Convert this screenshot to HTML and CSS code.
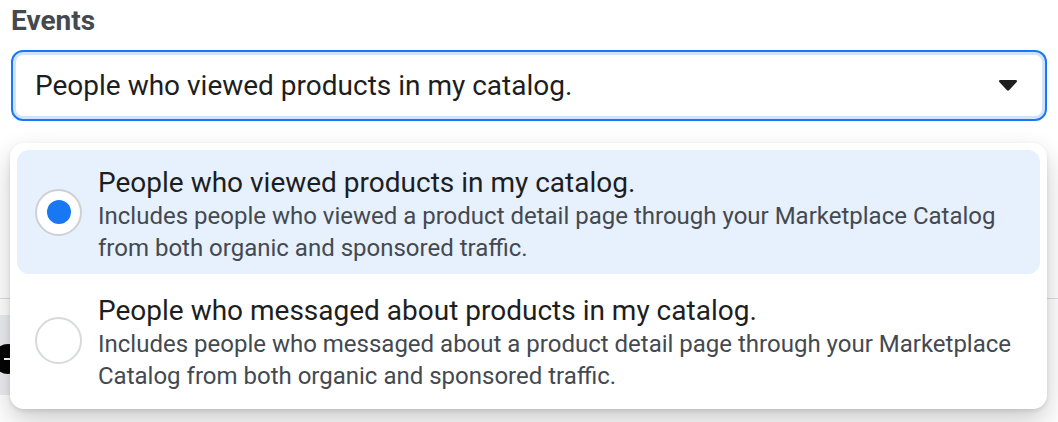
FILE: index.html
```html
<!DOCTYPE html>
<html lang="en">
<head>
<meta charset="utf-8">
<title>Events</title>
<link rel="stylesheet" href="styles.css">
</head>
<body>
<div class="page">
  <div class="field">
    <div class="label">Events</div>
    <div class="select">
      <span class="select-text">People who viewed products in my catalog.</span>
      <svg class="caret" width="18" height="11" viewBox="0 0 18 11"><path d="M1.2 0h15.6c1 0 1.5 1.1.9 1.9L10 10.2c-.5.6-1.5.6-2 0L.3 1.9C-.3 1.1.2 0 1.2 0z" fill="#1c1e21"/></svg>
    </div>
  </div>
  <div class="under">
    <div class="divider"></div>
    <div class="gray-row"><span class="minus-icon"></span></div>
  </div>
  <div class="menu">
    <div class="option selected">
      <span class="radio checked"><span class="dot"></span></span>
      <div class="option-text">
        <div class="option-title">People who viewed products in my catalog.</div>
        <div class="option-desc">Includes people who viewed a product detail page through your Marketplace Catalog from both organic and sponsored traffic.</div>
      </div>
    </div>
    <div class="option">
      <span class="radio"></span>
      <div class="option-text">
        <div class="option-title">People who messaged about products in my catalog.</div>
        <div class="option-desc">Includes people who messaged about a product detail page through your Marketplace Catalog from both organic and sponsored traffic.</div>
      </div>
    </div>
  </div>
</div>
</body>
</html>
```

FILE: styles.css
```css
* { box-sizing: border-box; }
html, body {
  margin: 0;
  padding: 0;
  background: #ffffff;
  font-family: Roboto, "Liberation Sans", Arial, sans-serif;
  overflow: hidden;
}
.page {
  position: relative;
  width: 1058px;
  height: 422px;
  padding: 5px 11px 0 11px;
}
.label {
  font-size: 28px;
  line-height: 32px;
  font-weight: 700;
  color: #45484d;
}
.select {
  margin-top: 13px;
  width: 1036px;
  height: 71px;
  border: 2px solid #1877f2;
  border-radius: 12px;
  box-shadow: inset 0 0 0 3px #d3e2fb;
  display: flex;
  align-items: center;
  justify-content: space-between;
  padding: 0 28px 0 22px;
}
.select-text {
  font-size: 28px;
  line-height: 32px;
  color: #1c1e21;
}
.caret { display: block; }
.under {
  margin-top: 177px;
  margin-left: -11px;
  margin-right: -11px;
}
.divider {
  height: 1px;
  background: #dadde1;
}
.gray-row {
  margin-top: 16px;
  width: 400px;
  height: 80px;
  background: #ebedf0;
  position: relative;
}
.minus-icon {
  position: absolute;
  left: -7px;
  top: 29px;
  width: 30px;
  height: 30px;
  border-radius: 50%;
  background: #050505;
}
.minus-icon::after {
  content: "";
  position: absolute;
  left: 11px;
  top: 14px;
  width: 12px;
  height: 2px;
  background: #ffffff;
}
.menu {
  position: absolute;
  left: 10px;
  top: 143px;
  width: 1037px;
  height: 266px;
  padding: 7px;
  background: #ffffff;
  border-radius: 14px;
  box-shadow: 0 12px 28px 0 rgba(0, 0, 0, 0.2), 0 2px 4px 0 rgba(0, 0, 0, 0.1);
  display: flex;
  flex-direction: column;
  gap: 4px;
}
.option {
  height: 124px;
  border-radius: 12px;
  display: flex;
  padding: 17px 20px 8px 18px;
}
.option.selected { background: #e7f0fd; }
.radio {
  flex: none;
  align-self: center;
  margin-top: -9px;
  width: 47px;
  height: 47px;
  border-radius: 50%;
  border: 2px solid #d6d9dd;
  background: #ffffff;
  display: flex;
  align-items: center;
  justify-content: center;
}
.radio.checked { border-color: #ced0d4; }
.dot {
  width: 24px;
  height: 24px;
  border-radius: 50%;
  background: #1877f2;
}
.option-text {
  margin-left: 16px;
}
.option-title {
  font-size: 28px;
  line-height: 32px;
  color: #1c1e21;
}
.option-desc {
  margin-top: 1px;
  font-size: 24px;
  line-height: 32px;
  color: #444950;
}
```
